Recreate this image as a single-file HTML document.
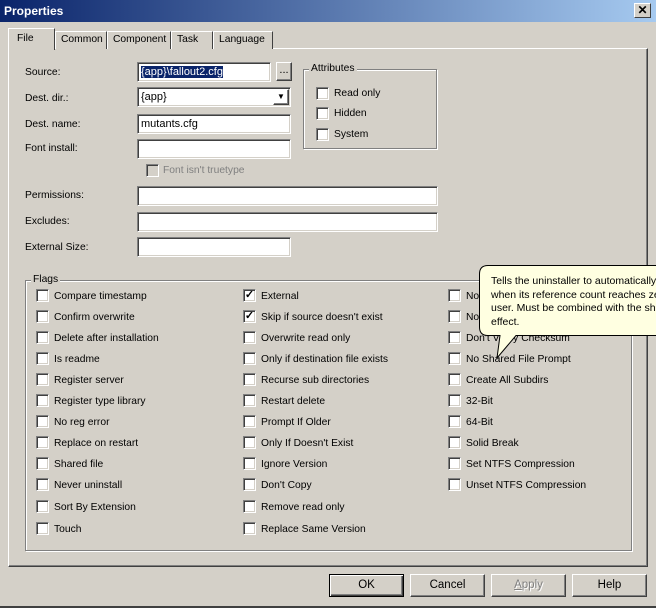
<!DOCTYPE html>
<html><head><style>
*{box-sizing:border-box}
body{margin:0;width:656px;height:608px;background:#d4d0c8;font-family:"Liberation Sans",sans-serif;font-size:10.3px;color:#000;position:relative;overflow:hidden}
.a{position:absolute;white-space:nowrap}
.title{left:0;top:0;width:656px;height:22px;background:linear-gradient(90deg,#0a246a,#a6caf0);color:#fff;font-weight:bold;font-size:12px;line-height:22px;padding-left:4px}
.close{left:634px;top:3px;width:17px;height:15px;background:#d4d0c8;border:1px solid;border-color:#fff #404040 #404040 #fff;text-align:center;font-weight:bold;font-size:12px;line-height:12px}
.tab{top:31px;height:18px;border:1px solid;border-color:#fff #404040 transparent #fff;border-bottom:none;line-height:16px;padding-left:5px;background:#d4d0c8;font-size:10.3px}
.panel{left:8px;top:48px;width:640px;height:519px;border:1px solid;border-color:#fff #404040 #404040 #fff;box-shadow:inset -1px -1px 0 #808080}
.in{background:#fff;border:1px solid;border-color:#808080 #fff #fff #808080;box-shadow:inset 1px 1px 0 #404040,inset -1px -1px 0 #d4d0c8;height:20px;line-height:18px;padding-left:3px;font-size:11px}
.grp{border:1px solid #808080;box-shadow:1px 1px 0 #fff,inset 1px 1px 0 #fff}
.gl{background:#d4d0c8;padding:0 2px;line-height:12px}
.cb{width:13px;height:13px;background:#fff;border:1px solid;border-color:#808080 #fff #fff #808080;box-shadow:inset 1px 1px 0 #404040,inset -1px -1px 0 #d4d0c8;font-size:11px;line-height:10px;text-align:center;font-weight:bold}
.t{left:18px;line-height:13px}
.btn{top:574px;width:75px;height:23px;border:1px solid;border-color:#fff #404040 #404040 #fff;box-shadow:inset -1px -1px 0 #808080;text-align:center;line-height:21px;font-size:11.5px}
</style></head><body>
<div class="a title">Properties</div>
<div class="a close">✕</div>
<div class="a panel"></div>
<div class="a tab" style="left:55px;width:52px">Common</div>
<div class="a tab" style="left:107px;width:64px">Component</div>
<div class="a tab" style="left:171px;width:42px">Task</div>
<div class="a tab" style="left:213px;width:60px">Language</div>
<div class="a tab" style="left:8px;top:28px;height:22px;width:47px;padding-left:8px;line-height:20px">File</div>

<div class="a" style="left:25px;top:67px">Source:</div>
<div class="a in" style="left:137px;top:62px;width:134px"><span style="background:#0a246a;color:#fff">{app}\fallout2.cfg</span></div>
<div class="a btn" style="left:276px;top:62px;width:16px;height:19px;line-height:15px;font-size:11px">...</div>
<div class="a" style="left:25px;top:93px">Dest. dir.:</div>
<div class="a in" style="left:137px;top:87px;width:154px">{app}</div>
<div class="a btn" style="left:273px;top:89px;width:16px;height:16px;line-height:14px;font-size:8px">▼</div>
<div class="a" style="left:25px;top:119px">Dest. name:</div>
<div class="a in" style="left:137px;top:114px;width:154px">mutants.cfg</div>
<div class="a" style="left:25px;top:143px">Font install:</div>
<div class="a in" style="left:137px;top:139px;width:154px"></div>
<div class="a cb" style="left:146px;top:164px;background:#d4d0c8"></div>
<div class="a" style="left:163px;top:165px;color:#808080">Font isn't truetype</div>
<div class="a" style="left:25px;top:190px">Permissions:</div>
<div class="a in" style="left:137px;top:186px;width:301px"></div>
<div class="a" style="left:25px;top:216px">Excludes:</div>
<div class="a in" style="left:137px;top:212px;width:301px"></div>
<div class="a" style="left:25px;top:242px">External Size:</div>
<div class="a in" style="left:137px;top:237px;width:154px"></div>

<div class="a grp" style="left:303px;top:69px;width:134px;height:80px"></div>
<div class="a gl" style="left:309px;top:63px">Attributes</div>
<div class="a cb" style="left:316px;top:87px"></div><div class="a" style="left:334px;top:88px">Read only</div>
<div class="a cb" style="left:316px;top:107px"></div><div class="a" style="left:334px;top:108px">Hidden</div>
<div class="a cb" style="left:316px;top:128px"></div><div class="a" style="left:334px;top:129px">System</div>

<div class="a grp" style="left:25px;top:280px;width:607px;height:271px"></div>
<div class="a gl" style="left:31px;top:274px">Flags</div>

<div class="a" style="left:36px;top:289px">
<div class="a cb" style="top:0"></div><div class="a t" style="top:1px">Compare timestamp</div>
<div class="a cb" style="top:21px"></div><div class="a t" style="top:22px">Confirm overwrite</div>
<div class="a cb" style="top:42px"></div><div class="a t" style="top:43px">Delete after installation</div>
<div class="a cb" style="top:63px"></div><div class="a t" style="top:64px">Is readme</div>
<div class="a cb" style="top:84px"></div><div class="a t" style="top:85px">Register server</div>
<div class="a cb" style="top:105px"></div><div class="a t" style="top:106px">Register type library</div>
<div class="a cb" style="top:126px"></div><div class="a t" style="top:127px">No reg error</div>
<div class="a cb" style="top:147px"></div><div class="a t" style="top:148px">Replace on restart</div>
<div class="a cb" style="top:168px"></div><div class="a t" style="top:169px">Shared file</div>
<div class="a cb" style="top:189px"></div><div class="a t" style="top:190px">Never uninstall</div>
<div class="a cb" style="top:211px"></div><div class="a t" style="top:212px">Sort By Extension</div>
<div class="a cb" style="top:233px"></div><div class="a t" style="top:234px">Touch</div>
</div>
<div class="a" style="left:243px;top:289px">
<div class="a cb" style="top:0">✓</div><div class="a t" style="top:1px">External</div>
<div class="a cb" style="top:21px">✓</div><div class="a t" style="top:22px">Skip if source doesn't exist</div>
<div class="a cb" style="top:42px"></div><div class="a t" style="top:43px">Overwrite read only</div>
<div class="a cb" style="top:63px"></div><div class="a t" style="top:64px">Only if destination file exists</div>
<div class="a cb" style="top:84px"></div><div class="a t" style="top:85px">Recurse sub directories</div>
<div class="a cb" style="top:105px"></div><div class="a t" style="top:106px">Restart delete</div>
<div class="a cb" style="top:126px"></div><div class="a t" style="top:127px">Prompt If Older</div>
<div class="a cb" style="top:147px"></div><div class="a t" style="top:148px">Only If Doesn't Exist</div>
<div class="a cb" style="top:168px"></div><div class="a t" style="top:169px">Ignore Version</div>
<div class="a cb" style="top:189px"></div><div class="a t" style="top:190px">Don't Copy</div>
<div class="a cb" style="top:211px"></div><div class="a t" style="top:212px">Remove read only</div>
<div class="a cb" style="top:233px"></div><div class="a t" style="top:234px">Replace Same Version</div>
</div>
<div class="a" style="left:448px;top:289px">
<div class="a cb" style="top:0"></div><div class="a t" style="top:1px">No</div>
<div class="a cb" style="top:21px"></div><div class="a t" style="top:22px">No</div>
<div class="a cb" style="top:42px"></div><div class="a t" style="top:43px">Don't Verify Checksum</div>
<div class="a cb" style="top:63px"></div><div class="a t" style="top:64px">No Shared File Prompt</div>
<div class="a cb" style="top:84px"></div><div class="a t" style="top:85px">Create All Subdirs</div>
<div class="a cb" style="top:105px"></div><div class="a t" style="top:106px">32-Bit</div>
<div class="a cb" style="top:126px"></div><div class="a t" style="top:127px">64-Bit</div>
<div class="a cb" style="top:147px"></div><div class="a t" style="top:148px">Solid Break</div>
<div class="a cb" style="top:168px"></div><div class="a t" style="top:169px">Set NTFS Compression</div>
<div class="a cb" style="top:189px"></div><div class="a t" style="top:190px">Unset NTFS Compression</div>
</div>

<svg class="a" style="left:478px;top:264px" width="178" height="96">
<path d="M10,1.5 H180 V71.5 H38 L19,94 L22,71.5 H10 Q1.5,71.5 1.5,63 V10 Q1.5,1.5 10,1.5 Z" fill="#ffffe1" stroke="#000" stroke-width="1"/>
</svg>
<div class="a" style="left:491px;top:275px;line-height:13.5px;width:165px;overflow:hidden;font-size:10.5px">Tells the uninstaller to automatically<br>when its reference count reaches zero<br>user. Must be combined with the shared<br>effect.</div>

<div class="a btn" style="left:329px;border:1px solid #000;box-shadow:inset 1px 1px 0 #fff,inset -1px -1px 0 #404040,inset -2px -2px 0 #808080">OK</div>
<div class="a btn" style="left:410px">Cancel</div>
<div class="a btn" style="left:491px;color:#808080;text-shadow:1px 1px 0 #fff"><u>A</u>pply</div>
<div class="a btn" style="left:572px">Help</div>
<div class="a" style="left:0;top:606px;width:656px;height:2px;background:#404040"></div>
</body></html>
